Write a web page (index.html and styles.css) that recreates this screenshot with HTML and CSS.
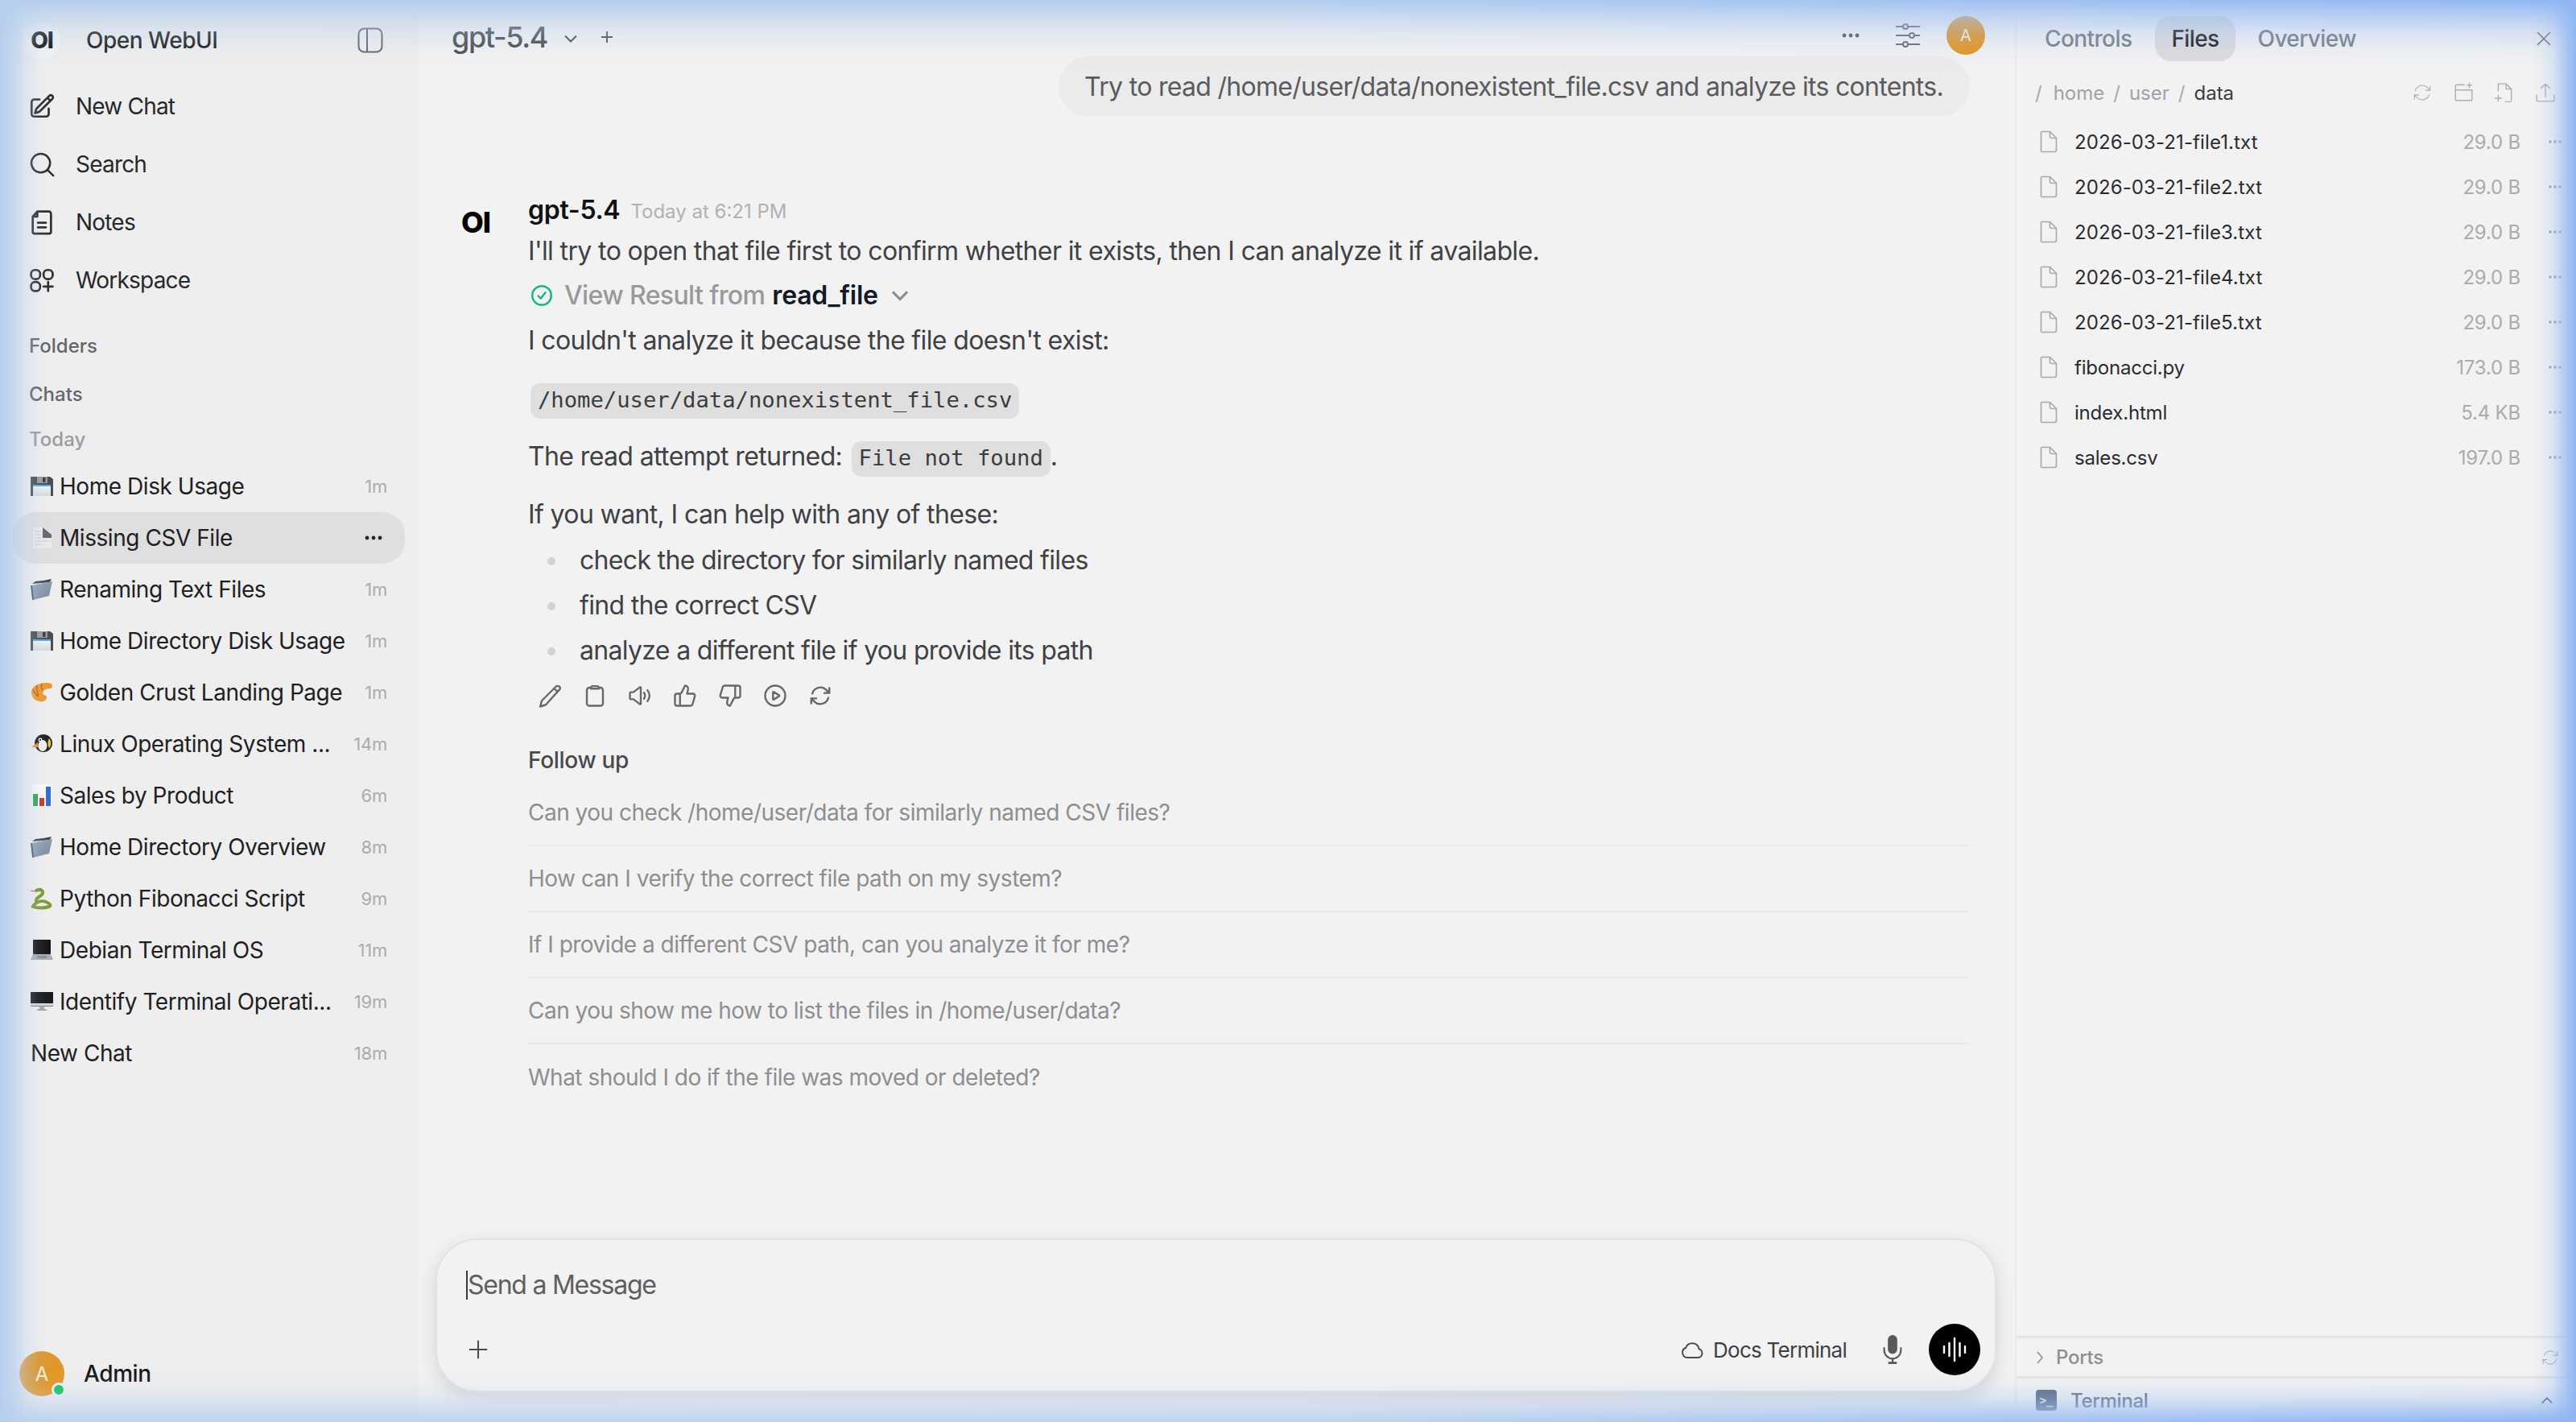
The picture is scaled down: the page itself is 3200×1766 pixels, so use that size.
FILE: index.html
```html
<!DOCTYPE html>
<html lang="en">
<head>
<meta charset="utf-8">
<title>Open WebUI</title>
<link rel="stylesheet" href="styles.css">
</head>
<body>
<svg class="defs" aria-hidden="true">
  <defs>
    <linearGradient id="fold" x1="0" y1="0" x2="1" y2="1"><stop offset="0" stop-color="#98a8ba"/><stop offset="1" stop-color="#7b8c9f"/></linearGradient>
    <linearGradient id="labelg" x1="0" y1="0" x2="0" y2="1"><stop offset="0" stop-color="#f4f6f8"/><stop offset="1" stop-color="#d6dade"/></linearGradient>
    <symbol id="e-floppy" viewBox="0 0 28 28"><path d="M0 2h24l4 3v21H0z" fill="#4b4e53"/><rect x="8" y="2" width="13" height="8" fill="#9a9da1"/><rect x="15" y="3" width="3.5" height="6" fill="#3d4045"/><rect x="3" y="12" width="22" height="14" fill="url(#labelg)"/><rect x="3" y="12" width="22" height="2" fill="#5fa4e6"/></symbol>
    <symbol id="e-doc" viewBox="0 0 28 28"><path d="M3 1h12l11 9v17H3z" fill="#e9e9ea"/><path d="M15 1l11 9v4H15z" fill="#68696b"/><path d="M5 6h8M5 10h8M5 14h8M5 18h19M5 22h10" stroke="#cfcfcf" stroke-width="1.200"/></symbol>
    <symbol id="e-folder" viewBox="0 0 28 28"><path d="M2 7l4-3 10-1 10-2-2 4z" fill="#3f4a56"/><path d="M1 9l26-5-4 18-20 5z" fill="url(#fold)"/><path d="M1 9l2 18" stroke="#4a5561" stroke-width="1.800"/></symbol>
    <symbol id="e-croissant" viewBox="0 0 28 28"><path d="M1 14C1 6 10 2 19 2c6 0 9 2 8 5-1 3-5 2-8 3-3 1-4 3-3.500 6 1.500 2 4.500 1 4.500 4 0 4-5 6-9 5C5 24 1 20 1 14z" fill="#ec9a2f"/><path d="M8 5c-1 4 0 9 2 12M14 3c-1 3-1 6 1 8M3 10c1 4 4 7 7 9" stroke="#b9641a" stroke-width="1.400" fill="none"/></symbol>
    <symbol id="e-penguin" viewBox="0 0 28 28"><circle cx="16" cy="13" r="11" fill="#222326"/><ellipse cx="15" cy="16" rx="5.500" ry="7" fill="#eee"/><circle cx="12" cy="9" r="2.400" fill="#fff"/><circle cx="12" cy="9" r="1.100" fill="#000"/><path d="M1 18l8-6 1 6z" fill="#e8912c"/><path d="M23 7c3 3 3 9 0 12-2-3-2-9 0-12z" fill="#e9c43c"/></symbol>
    <symbol id="e-chart" viewBox="0 0 28 28"><rect x="2" y="0" width="24" height="27" fill="#f7f8fa"/><rect x="3" y="12" width="6" height="15" fill="#2fa84f"/><rect x="11" y="17" width="6" height="10" fill="#d5322c"/><rect x="19" y="3" width="6" height="24" fill="#2d6fd6"/></symbol>
    <symbol id="e-snake" viewBox="0 0 28 28"><path d="M7 4c6-3 10 1 7 5-3 3-8 4-7 8M4 22c4-4 10-6 15-4 5 2 7 5 4 6-6 2-15 2-20 0z" fill="none" stroke="#7d9b32" stroke-width="4" stroke-linecap="round"/><path d="M0 4l5 1" stroke="#c2534a" stroke-width="1"/></symbol>
    <symbol id="e-laptop" viewBox="0 0 28 28"><rect x="3" y="1" width="22" height="18" rx="1" fill="#16171a"/><path d="M3 19h22l3 7H0z" fill="#a8abb0"/><rect x="8" y="21" width="12" height="3" fill="#8b8e93"/></symbol>
    <symbol id="e-desktop" viewBox="0 0 28 28"><rect x="0" y="2" width="28" height="18" fill="#1a1b1e"/><rect x="0" y="16" width="28" height="3.500" fill="#d3d5d8"/><rect x="11" y="19.500" width="6" height="4" fill="#a7a9ad"/><rect x="8" y="23.500" width="12" height="1.500" fill="#8f9195"/></symbol>
    <symbol id="i-file" viewBox="0 0 22 28"><path d="M2.500 1.500h10l8 8v15a2 2 0 0 1-2 2h-16a1.500 1.500 0 0 1-1-1.500V3a1.500 1.500 0 0 1 1-1.500zM12.500 1.500v6a2 2 0 0 0 2 2h6" fill="none" stroke="currentColor" stroke-width="1.600"/></symbol>
    <symbol id="i-dots" viewBox="0 0 24 8"><circle cx="4" cy="4" r="2.400"/><circle cx="12" cy="4" r="2.400"/><circle cx="20" cy="4" r="2.400"/></symbol>
    <symbol id="i-refresh" viewBox="0 0 24 24"><path d="M16.023 9.348h4.992v-.001M2.985 19.644v-4.992m0 0h4.992m-4.993 0l3.181 3.183a8.250 8.250 0 0013.803-3.700M4.031 9.865a8.250 8.250 0 0113.803-3.700l3.181 3.182m0-4.991v4.990" fill="none" stroke="currentColor" stroke-linecap="round" stroke-linejoin="round"/></symbol>
  </defs>
</svg>

<div class="app">
  <aside class="sidebar">
    <div class="side-head">
      <span class="logo-round"><span class="logo-oi">OI</span></span>
      <span class="brand">Open WebUI</span>
      <svg class="panel-toggle" viewBox="0 0 32 32" fill="none" stroke="currentColor" stroke-width="2"><rect x="1.500" y="1.500" width="29" height="29" rx="7"/><path d="M12 1.500v29"/></svg>
    </div>
    <nav class="side-nav">
      <div class="nav-row"><svg class="nav-icon" viewBox="0 0 24 24" fill="none" stroke="currentColor" stroke-width="1.900" stroke-linecap="round" stroke-linejoin="round"><path d="M16.862 4.487l1.687-1.688a1.875 1.875 0 112.652 2.652L10.582 16.070a4.500 4.500 0 01-1.897 1.130L6 18l.8-2.685a4.500 4.500 0 011.130-1.897l8.932-8.931zm0 0L19.500 7.125M18 14v4.750A2.250 2.250 0 0115.750 21H5.250A2.250 2.250 0 013 18.750V8.250A2.250 2.250 0 015.250 6H10"/></svg><span>New Chat</span></div>
      <div class="nav-row"><svg class="nav-icon" viewBox="0 0 24 24" fill="none" stroke="currentColor" stroke-width="1.800" stroke-linecap="round"><circle cx="11" cy="11" r="8.200"/><path d="M17 17l5 5"/></svg><span>Search</span></div>
      <div class="nav-row"><svg class="nav-icon" viewBox="0 0 24 24" fill="none" stroke="currentColor" stroke-width="1.900" stroke-linecap="round" stroke-linejoin="round"><path d="M8 2.500h10a2 2 0 0 1 2 2v16a1.500 1.500 0 0 1-1.500 1.500h-13A1.500 1.500 0 0 1 4 20.500V7zM8 2.500V7H4M8.500 12.500h7M8.500 16.500h7"/></svg><span>Notes</span></div>
      <div class="nav-row"><svg class="nav-icon" viewBox="0 0 24 24" fill="none" stroke="currentColor" stroke-width="1.900" stroke-linecap="round"><rect x="2.500" y="3" width="8" height="8" rx="3.500"/><rect x="13.500" y="3" width="8" height="8" rx="3.500"/><rect x="2.500" y="13.500" width="8" height="8" rx="3.500"/><path d="M17.500 13.500v8M13.500 17.500h8"/></svg><span>Workspace</span></div>
    </nav>
    <div class="side-label label-folders">Folders</div>
    <div class="side-label label-chats">Chats</div>
    <div class="side-label label-today">Today</div>
    <ul class="chat-list">
      <li class="chat"><svg class="emoji"><use href="#e-floppy"/></svg><span class="chat-title">Home Disk Usage</span><span class="chat-time">1m</span></li>
      <li class="chat chat-active"><svg class="emoji"><use href="#e-doc"/></svg><span class="chat-title">Missing CSV File</span><svg class="chat-more"><use href="#i-dots"/></svg></li>
      <li class="chat"><svg class="emoji"><use href="#e-folder"/></svg><span class="chat-title">Renaming Text Files</span><span class="chat-time">1m</span></li>
      <li class="chat"><svg class="emoji"><use href="#e-floppy"/></svg><span class="chat-title">Home Directory Disk Usage</span><span class="chat-time">1m</span></li>
      <li class="chat"><svg class="emoji"><use href="#e-croissant"/></svg><span class="chat-title">Golden Crust Landing Page</span><span class="chat-time">1m</span></li>
      <li class="chat"><svg class="emoji"><use href="#e-penguin"/></svg><span class="chat-title">Linux Operating System ...</span><span class="chat-time">14m</span></li>
      <li class="chat"><svg class="emoji"><use href="#e-chart"/></svg><span class="chat-title">Sales by Product</span><span class="chat-time">6m</span></li>
      <li class="chat"><svg class="emoji"><use href="#e-folder"/></svg><span class="chat-title">Home Directory Overview</span><span class="chat-time">8m</span></li>
      <li class="chat"><svg class="emoji"><use href="#e-snake"/></svg><span class="chat-title">Python Fibonacci Script</span><span class="chat-time">9m</span></li>
      <li class="chat"><svg class="emoji"><use href="#e-laptop"/></svg><span class="chat-title">Debian Terminal OS</span><span class="chat-time">11m</span></li>
      <li class="chat"><svg class="emoji"><use href="#e-desktop"/></svg><span class="chat-title">Identify Terminal Operati...</span><span class="chat-time">19m</span></li>
      <li class="chat"><span class="chat-title">New Chat</span><span class="chat-time">18m</span></li>
    </ul>
    <div class="side-foot">
      <span class="avatar avatar-lg">A<span class="status-dot"></span></span>
      <span class="user-name">Admin</span>
    </div>
  </aside>

  <main class="main">
    <header class="main-head">
      <span class="model-name">gpt-5.4</span>
      <svg class="head-chevron" viewBox="0 0 20 20" fill="none" stroke="currentColor" stroke-width="2"><path d="M3 6.500l7 7 7-7"/></svg>
      <svg class="head-plus" viewBox="0 0 20 20" fill="none" stroke="currentColor" stroke-width="1.900"><path d="M10 3v14M3 10h14"/></svg>
      <span class="head-spacer"></span>
      <svg class="head-dots"><use href="#i-dots"/></svg>
      <svg class="head-sliders" viewBox="0 0 30 30" fill="none" stroke="currentColor" stroke-width="2"><path d="M0 4h9M15 4h15M0 15h17M23 15h7M0 26h9M15 26h15"/><circle cx="12" cy="4" r="3"/><circle cx="20" cy="15" r="3"/><circle cx="12" cy="26" r="3"/></svg>
      <span class="avatar avatar-sm">A</span>
    </header>

    <section class="thread">
      <div class="user-row"><div class="user-bubble">Try to read /home/user/data/nonexistent_file.csv and analyze its contents.</div></div>
      <article class="message">
        <div class="msg-logo">OI</div>
        <div class="msg-body">
          <div class="msg-meta"><span class="msg-name">gpt-5.4</span><span class="msg-time">Today at 6:21 PM</span></div>
          <p class="line">I'll try to open that file first to confirm whether it exists, then I can analyze it if available.</p>
          <div class="line tool-line">
            <svg class="tool-check" viewBox="0 0 28 28" fill="none" stroke="#10b981" stroke-width="2.400" stroke-linecap="round" stroke-linejoin="round"><circle cx="14" cy="14" r="11.800"/><path d="M9.500 14.500l3.200 3.200 5.800-7.400"/></svg>
            <span class="tool-muted">View Result from</span><strong class="tool-name">read_file</strong>
            <svg class="tool-chevron" viewBox="0 0 20 20" fill="none" stroke="currentColor" stroke-width="2.400"><path d="M3 6.500l7 7 7-7"/></svg>
          </div>
          <p class="line gap-sm">I couldn't analyze it because the file doesn't exist:</p>
          <p class="line gap-lg"><code class="code">/home/user/data/nonexistent_file.csv</code></p>
          <p class="line gap-lg">The read attempt returned: <code class="code">File not found</code>.</p>
          <p class="line gap-lg">If you want, I can help with any of these:</p>
          <ul class="bullets">
            <li>check the directory for similarly named files</li>
            <li>find the correct CSV</li>
            <li>analyze a different file if you provide its path</li>
          </ul>
          <div class="actions">
            <svg class="action" viewBox="0 0 24 24"><path d="M20.500 2.500a2 2 0 0 1 1.500 3L8 21l-5.500 1.800L4 17 18 3a2.500 2.500 0 0 1 2.500-.5zM16.500 5l3 3"/></svg>
            <svg class="action" viewBox="0 0 24 24"><path d="M8 4H6.500A2.500 2.500 0 0 0 4 6.500v13A2.500 2.500 0 0 0 6.500 22h11a2.500 2.500 0 0 0 2.500-2.500v-13A2.500 2.500 0 0 0 17.500 4H16M8 4.500A2 2 0 0 1 10 2.500h4a2 2 0 0 1 2 2V5H8z"/></svg>
            <svg class="action" viewBox="0 0 24 24"><path d="M12 3.500 5.500 8.500H3a1 1 0 0 0-1 1v5a1 1 0 0 0 1 1h2.500l6.500 5a.6.6 0 0 0 .8-.5V4a.6.6 0 0 0-.8-.5zM16 9c1.300 2 1.300 4 0 6M19.500 6.500c2.500 3.500 2.500 7.500 0 11"/></svg>
            <svg class="action" viewBox="0 0 24 24"><path d="M7 10v12M15 5.880 14 10h5.830a2 2 0 0 1 1.920 2.560l-2.330 8A2 2 0 0 1 17.500 22H4a2 2 0 0 1-2-2v-8a2 2 0 0 1 2-2h2.760a2 2 0 0 0 1.790-1.110L12 2a3.130 3.130 0 0 1 3 3.880Z"/></svg>
            <svg class="action" viewBox="0 0 24 24"><path d="M17 14V2M9 18.120 10 14H4.170a2 2 0 0 1-1.920-2.560l2.330-8A2 2 0 0 1 6.500 2H20a2 2 0 0 1 2 2v8a2 2 0 0 1-2 2h-2.760a2 2 0 0 0-1.790 1.110L12 22a3.130 3.130 0 0 1-3-3.880Z"/></svg>
            <svg class="action" viewBox="0 0 24 24"><circle cx="12" cy="12" r="10"/><path d="M16 11.600a.5.500 0 0 1 0 .8l-5.500 3.300a.5.500 0 0 1-.7-.4V8.700a.5.500 0 0 1 .7-.4z"/></svg>
            <svg class="action" viewBox="0 0 24 24"><path d="M16.023 9.348h4.992v-.001M2.985 19.644v-4.992m0 0h4.992m-4.993 0l3.181 3.183a8.250 8.250 0 0013.803-3.700M4.031 9.865a8.250 8.250 0 0113.803-3.700l3.181 3.182m0-4.991v4.990"/></svg>
          </div>
          <div class="followup-title">Follow up</div>
          <ul class="followups">
            <li>Can you check /home/user/data for similarly named CSV files?</li>
            <li>How can I verify the correct file path on my system?</li>
            <li>If I provide a different CSV path, can you analyze it for me?</li>
            <li>Can you show me how to list the files in /home/user/data?</li>
            <li>What should I do if the file was moved or deleted?</li>
          </ul>
        </div>
      </article>
    </section>

    <section class="composer">
      <div class="composer-input"><span class="caret"></span>Send a Message</div>
      <div class="composer-bar">
        <svg class="composer-plus" viewBox="0 0 28 28" fill="none" stroke="currentColor" stroke-width="2.200"><path d="M14 2v24M2 14h24"/></svg>
        <span class="head-spacer"></span>
        <svg class="cloud" viewBox="0 0 28 24" fill="none" stroke="currentColor" stroke-width="2" stroke-linejoin="round"><path d="M8 22h13a5.500 5.500 0 0 0 1.500-10.800A8.500 8.500 0 0 0 6.200 9.800 6.300 6.300 0 0 0 8 22z"/></svg>
        <span class="docs-label">Docs Terminal</span>
        <svg class="mic" viewBox="0 0 28 40" fill="currentColor"><rect x="7.500" y="0" width="13" height="26" rx="6.500"/><path d="M2.500 18v3a11.500 11.500 0 0 0 23 0v-3" fill="none" stroke="currentColor" stroke-width="2.400" stroke-linecap="round"/><rect x="12.800" y="32" width="2.400" height="6"/><rect x="8" y="37" width="12" height="3" rx="1"/></svg>
        <span class="voice-btn"><svg class="voice-icon" viewBox="0 0 32 32" stroke="#fff" stroke-width="2.400" stroke-linecap="round"><path d="M3 12v8M9.500 8v16M16 2v28M22.500 8v16M29 12v8"/></svg></span>
      </div>
    </section>
  </main>

  <aside class="panel">
    <div class="tabs">
      <span class="tab">Controls</span>
      <span class="tab tab-active">Files</span>
      <span class="tab tab-over">Overview</span>
      <svg class="panel-close" viewBox="0 0 20 20" fill="none" stroke="currentColor" stroke-width="1.500"><path d="M2 2l16 16M18 2L2 18"/></svg>
    </div>
    <div class="crumbs">
      <span class="crumb-sep crumb-root">/</span><span>home</span><span class="crumb-sep">/</span><span>user</span><span class="crumb-sep">/</span><span class="crumb-now">data</span>
      <span class="head-spacer"></span>
      <svg class="crumb-icon"><use href="#i-refresh"/></svg>
      <svg class="crumb-icon" viewBox="0 0 24 24" fill="none" stroke="currentColor" stroke-width="1.300" stroke-linecap="round"><path d="M13 3H5a2 2 0 0 0-2 2v15a1 1 0 0 0 1 1h17a1 1 0 0 0 1-1V9H3M19 1v5M16.500 3.500h5"/></svg>
      <svg class="crumb-icon" viewBox="0 0 24 24" fill="none" stroke="currentColor" stroke-width="1.300" stroke-linecap="round"><path d="M5 10V2h9l6 6v13a1.500 1.500 0 0 1-1.500 1.500H13M14 2v6h6M5 15v7M1.500 18.500h7"/></svg>
      <svg class="crumb-icon" viewBox="0 0 24 24" fill="none" stroke="currentColor" stroke-width="1.300" stroke-linecap="round" stroke-linejoin="round"><path d="M12 17V2M7 7l5-5 5 5M2 15v5a2 2 0 0 0 2 2h16a2 2 0 0 0 2-2v-5"/></svg>
    </div>
    <ul class="files">
      <li class="file file-dated"><svg class="file-icon"><use href="#i-file"/></svg><span class="file-name">2026-03-21-file1.txt</span><span class="file-size">29.0 B</span><svg class="file-more"><use href="#i-dots"/></svg></li>
      <li class="file file-dated"><svg class="file-icon"><use href="#i-file"/></svg><span class="file-name">2026-03-21-file2.txt</span><span class="file-size">29.0 B</span><svg class="file-more"><use href="#i-dots"/></svg></li>
      <li class="file file-dated"><svg class="file-icon"><use href="#i-file"/></svg><span class="file-name">2026-03-21-file3.txt</span><span class="file-size">29.0 B</span><svg class="file-more"><use href="#i-dots"/></svg></li>
      <li class="file file-dated"><svg class="file-icon"><use href="#i-file"/></svg><span class="file-name">2026-03-21-file4.txt</span><span class="file-size">29.0 B</span><svg class="file-more"><use href="#i-dots"/></svg></li>
      <li class="file file-dated"><svg class="file-icon"><use href="#i-file"/></svg><span class="file-name">2026-03-21-file5.txt</span><span class="file-size">29.0 B</span><svg class="file-more"><use href="#i-dots"/></svg></li>
      <li class="file"><svg class="file-icon"><use href="#i-file"/></svg><span class="file-name">fibonacci.py</span><span class="file-size">173.0 B</span><svg class="file-more"><use href="#i-dots"/></svg></li>
      <li class="file"><svg class="file-icon"><use href="#i-file"/></svg><span class="file-name">index.html</span><span class="file-size">5.4 KB</span><svg class="file-more"><use href="#i-dots"/></svg></li>
      <li class="file"><svg class="file-icon"><use href="#i-file"/></svg><span class="file-name">sales.csv</span><span class="file-size">197.0 B</span><svg class="file-more"><use href="#i-dots"/></svg></li>
    </ul>
    <div class="panel-foot">
      <div class="foot-row ports">
        <svg class="foot-chev" viewBox="0 0 10 20" fill="none" stroke="currentColor" stroke-width="1.600"><path d="M2 3l6 7-6 7"/></svg>
        <span>Ports</span>
        <span class="head-spacer"></span>
        <svg class="foot-refresh"><use href="#i-refresh"/></svg>
      </div>
      <div class="foot-row terminal">
        <span class="term-icon">&gt;_</span>
        <span>Terminal</span>
        <span class="head-spacer"></span>
        <svg class="foot-up" viewBox="0 0 20 12" fill="none" stroke="currentColor" stroke-width="1.600"><path d="M3 10l7-7 7 7"/></svg>
      </div>
    </div>
  </aside>
</div>

<div class="glow glow-top"></div>
<div class="glow glow-bottom"></div>
<div class="glow glow-left"></div>
<div class="glow glow-right"></div>
</body>
</html>
```

FILE: styles.css
```css
* { box-sizing: border-box; }
html, body { margin: 0; padding: 0; }
body {
  width: 3200px;
  height: 1766px;
  overflow: hidden;
  position: relative;
  background: #f2f2f2;
  font-family: Inter, "Liberation Sans", sans-serif;
  color: #1f2023;
}
.defs { position: absolute; width: 0; height: 0; }
ul { list-style: none; margin: 0; padding: 0; }
p { margin: 0; }
.app { display: flex; width: 3200px; height: 1766px; }
.head-spacer { flex: 1; }

/* sidebar */
.sidebar { width: 520px; flex: none; background: #eeeeee; display: flex; flex-direction: column; border-right: 2px solid #ececec; }
.side-head { height: 96px; padding: 4px 42px 0 29px; display: flex; align-items: center; }
.logo-round { width: 46px; height: 46px; border-radius: 50%; background: #f3f3f3; display: flex; align-items: center; justify-content: center; }
.logo-oi { font-size: 28px; font-weight: 800; color: #111; letter-spacing: -1px; }
.brand { margin-left: 32px; font-size: 28px; font-weight: 500; color: #1c1c20; letter-spacing: -.5px; }
.panel-toggle { width: 32px; height: 32px; margin-left: auto; color: #63666b; }
.side-nav { display: flex; flex-direction: column; }
.nav-row { height: 72px; padding-left: 35px; display: flex; align-items: center; gap: 25px; font-size: 28px; color: #27282b; letter-spacing: -.8px; }
.nav-icon { width: 34px; height: 34px; flex: none; color: #2f3033; }
.side-label { height: 40px; padding-left: 36px; display: flex; align-items: center; font-size: 24px; font-weight: 500; color: #63666c; }
.label-folders { margin-top: 25px; }
.label-chats { margin-top: 20px; }
.label-today { margin-top: 16px; color: #9a9ca1; }
.chat-list { margin: 7px 0 0 16px; width: 487px; }
.chat { height: 64px; padding: 0 22px; display: flex; align-items: center; border-radius: 28px; font-size: 28px; color: #1f2023; letter-spacing: -.45px; }
.chat-active { background: #dfdfdf; }
.emoji { width: 28px; height: 28px; flex: none; margin-right: 8px; }
.chat-title { flex: 1; white-space: nowrap; overflow: hidden; }
.chat-time { font-size: 22px; color: #ababae; letter-spacing: -.2px; }
.chat-more { width: 24px; height: 8px; fill: #26272a; margin-right: 5px; }
.side-foot { margin-top: auto; height: 56px; margin-bottom: 32px; padding-left: 24px; display: flex; align-items: center; }
.avatar { display: flex; align-items: center; justify-content: center; border-radius: 50%; color: #f6efe3; background: linear-gradient(135deg, #d99a3c, #e8951a); }
.avatar-lg { width: 56px; height: 56px; font-size: 24px; position: relative; flex: none; }
.status-dot { position: absolute; right: -2px; bottom: -1px; width: 18px; height: 18px; border-radius: 50%; background: #10c464; border: 3px solid #f0f0f0; }
.user-name { margin-left: 24px; font-size: 28px; font-weight: 500; color: #18181b; letter-spacing: -.4px; }

/* main */
.main { width: 1983px; flex: none; display: flex; flex-direction: column; }
.main-head { height: 70px; flex: none; padding: 20px 37px 0 41px; display: flex; align-items: flex-start; }
.model-name { font-size: 36px; line-height: 52px; font-weight: 500; color: #4b4d52; letter-spacing: -1.4px; }
.head-chevron { width: 20px; height: 20px; margin: 18px 0 0 19px; color: #4b4d52; }
.head-plus { width: 20px; height: 20px; margin: 16px 0 0 25px; color: #4b4d52; }
.head-dots { width: 26px; height: 8px; margin: 20px 10px 0 0; fill: #55575c; }
.head-sliders { width: 30px; height: 30px; margin: 9px 0 0 33px; color: #6b6e74; }
.avatar-sm { width: 48px; height: 48px; font-size: 20px; margin-left: 33px; flex: none; }
.thread { flex: 1; min-height: 0; display: flex; flex-direction: column; padding: 0 58px 0 37px; font-size: 32px; color: #404144; letter-spacing: -.62px; }
.user-row { display: flex; justify-content: flex-end; }
.user-bubble { height: 74px; padding: 0 33px 0 32px; border-radius: 37px; background: #ebebeb; display: flex; align-items: center; white-space: nowrap; color: #5a5b5f; letter-spacing: -.7px; margin-right: -2px; }
.message { display: flex; margin-top: 92px; }
.msg-logo { width: 99px; flex: none; padding: 22px 0 0 16px; font-size: 36px; line-height: 36px; font-weight: 800; color: #050505; letter-spacing: -1px; }
.msg-body { flex: 1; min-width: 0; }
.msg-meta { height: 48px; display: flex; align-items: center; gap: 13px; }
.msg-name { font-size: 32px; font-weight: 600; color: #111; letter-spacing: -.3px; }
.msg-time { font-size: 24px; color: #b0b1b4; margin-top: 4px; letter-spacing: 0; }
.line { min-height: 48px; line-height: 48px; margin-top: 4px; white-space: nowrap; }
.tool-line { margin-top: 7px; display: flex; align-items: center; }
.tool-check { width: 28px; height: 28px; margin: 0 14px 0 3px; flex: none; }
.tool-muted { color: #98999c; font-weight: 500; margin-right: 9px; }
.tool-name { color: #111827; font-weight: 600; letter-spacing: -.2px; }
.tool-chevron { width: 26px; height: 26px; margin-left: 14px; color: #8b8c90; }
.gap-sm { margin-top: 8px; }
.gap-lg { margin-top: 24px; }
.code { font-family: "DejaVu Sans Mono", "Liberation Mono", monospace; font-size: 27.200px; line-height: 1; letter-spacing: 0; background: #dfdfdf; color: #3b3c3f; padding: 5px 9px 8px; border-radius: 12px; margin: 0 0 0 3px; }
.bullets { margin-top: 9px; }
.bullets li { height: 48px; line-height: 48px; margin-bottom: 8px; padding-left: 64px; position: relative; letter-spacing: -.68px; }
.bullets li::before { content: ""; position: absolute; left: 24px; top: 20px; width: 10px; height: 10px; border-radius: 50%; background: #ced2d9; }
.actions { height: 48px; margin: 6px 0 0 12px; display: flex; align-items: center; gap: 26px; }
.action { width: 30px; height: 30px; fill: none; stroke: #67686b; stroke-width: 1.900; stroke-linecap: round; stroke-linejoin: round; flex: none; }
.followup-title { height: 40px; margin-top: 36px; display: flex; align-items: center; font-size: 28px; font-weight: 500; color: #48494c; letter-spacing: -.3px; }
.followups { margin-top: 5px; }
.followups li { height: 82px; display: flex; align-items: center; font-size: 28px; color: #8d8e91; border-bottom: 2px solid #e9e9e9; letter-spacing: -.5px; }
.followups li:last-child { border-bottom: 0; }

/* composer */
.composer { flex: none; height: 191px; margin: 0 23px 37px 21px; padding: 0 18px 0 36px; border: 2px solid #e2e2e2; border-radius: 52px; background: #f2f2f2; box-shadow: 0 8px 22px rgba(30, 40, 60, .14); display: flex; flex-direction: column; }
.composer-input { height: 104px; padding-top: 38px; font-size: 32px; line-height: 36px; color: #5e5f62; position: relative; padding-left: 2px; letter-spacing: -1.250px; }
.caret { position: absolute; left: 0; top: 38px; width: 2px; height: 36px; background: #3a3b3e; }
.composer-bar { height: 64px; display: flex; align-items: center; }
.composer-plus { width: 26px; height: 26px; color: #4a4b4e; margin-left: 2px; }
.cloud { width: 28px; height: 24px; color: #4c4d50; margin-right: 12px; }
.docs-label { font-size: 26px; color: #3e3f42; font-weight: 400; letter-spacing: -.75px; margin-right: 44px; }
.mic { width: 26px; height: 36px; color: #58595c; margin-right: 32px; }
.voice-btn { width: 64px; height: 64px; border-radius: 50%; background: #000; display: flex; align-items: center; justify-content: center; flex: none; }
.voice-icon { width: 32px; height: 32px; }

/* right panel */
.panel { flex: 1; min-width: 0; background: #f2f2f2; border-left: 2px solid #ebebeb; display: flex; flex-direction: column; }
.tabs { margin-top: 20px; padding: 0 30px 0 15px; height: 56px; display: flex; align-items: center; font-size: 28px; font-weight: 500; color: #7c7e84; letter-spacing: -.6px; }
.tab { height: 56px; padding: 0 20px; display: flex; align-items: center; border-radius: 20px; margin-right: 8px; }
.tab-active { background: #dcdcdc; color: #1f2023; margin-left: 1px; }
.tab-over { margin-right: auto; }
.panel-close { width: 20px; height: 20px; color: #65676c; }
.crumbs { margin-top: 19px; height: 40px; padding: 0 25px 0 23px; display: flex; align-items: center; gap: 11px; font-size: 24px; color: #a1a2a6; }
.crumb-sep { color: #a8a9ad; }
.crumb-root { margin-right: 3px; }
.crumb-now { color: #3c3d40; }
.crumb-icon { width: 26px; height: 26px; color: #adaeb1; margin-left: 14px; flex: none; }
.files { margin-top: 13px; }
.file { height: 56px; padding: 0 16px 0 29px; display: flex; align-items: center; font-size: 24px; color: #2b2c2f; letter-spacing: -.2px; }
.file-dated .file-name { letter-spacing: .1px; }
.file-icon { width: 22px; height: 28px; color: #a9a9ab; flex: none; margin-right: 21px; }
.file-name { flex: 1; }
.file-size { color: #ababae; margin-right: 33px; letter-spacing: -.2px; }
.file-more { width: 20px; height: 6px; fill: #a8a9ac; flex: none; }
.panel-foot { margin-top: auto; }
.foot-row { display: flex; align-items: center; padding: 0 27px 0 24px; font-size: 24px; font-weight: 500; color: #8d8f94; border-top: 3px solid #e4e4e4; letter-spacing: -.3px; }
.ports { height: 50px; padding-right: 20px; }
.terminal { height: 57px; color: #68768c; }
.foot-chev { width: 10px; height: 20px; margin-right: 15px; }
.foot-refresh { width: 24px; height: 24px; color: #a5a6a9; }
.term-icon { width: 26px; height: 26px; border-radius: 4px; background: #5f6f88; color: #eef1f5; font-size: 14px; font-family: "DejaVu Sans Mono", monospace; font-weight: 700; display: flex; align-items: center; justify-content: center; margin-right: 17px; }
.foot-up { width: 18px; height: 12px; color: #2f3c52; }

/* window glow */
.glow { position: absolute; pointer-events: none; }
.glow-top { left: 0; top: 0; width: 3200px; height: 84px; background: linear-gradient(to right, #b4cdec, #b2cdee 50%, #8fb6f3); -webkit-mask-image: linear-gradient(to bottom, #000 0, rgba(0,0,0,.6) 25%, rgba(0,0,0,.25) 50%, rgba(0,0,0,.07) 75%, transparent 100%); mask-image: linear-gradient(to bottom, #000 0, rgba(0,0,0,.6) 25%, rgba(0,0,0,.25) 50%, rgba(0,0,0,.07) 75%, transparent 100%); }
.glow-bottom { left: 0; bottom: 0; width: 3200px; height: 64px; background: linear-gradient(to right, #bcd2ee, #bed3ee 50%, #8cb3f4); -webkit-mask-image: linear-gradient(to top, #000 0, rgba(0,0,0,.6) 25%, rgba(0,0,0,.25) 50%, rgba(0,0,0,.07) 75%, transparent 100%); mask-image: linear-gradient(to top, #000 0, rgba(0,0,0,.6) 25%, rgba(0,0,0,.25) 50%, rgba(0,0,0,.07) 75%, transparent 100%); }
.glow-left { left: 0; top: 0; width: 60px; height: 1766px; background: #b6cfee; -webkit-mask-image: linear-gradient(to right, #000 0, rgba(0,0,0,.7) 30%, rgba(0,0,0,.28) 55%, rgba(0,0,0,.07) 80%, transparent 100%); mask-image: linear-gradient(to right, #000 0, rgba(0,0,0,.7) 30%, rgba(0,0,0,.28) 55%, rgba(0,0,0,.07) 80%, transparent 100%); }
.glow-right { right: 0; top: 0; width: 56px; height: 1766px; background: #8fb6f3; -webkit-mask-image: linear-gradient(to left, #000 0, rgba(0,0,0,.65) 25%, rgba(0,0,0,.25) 50%, rgba(0,0,0,.07) 75%, transparent 100%); mask-image: linear-gradient(to left, #000 0, rgba(0,0,0,.65) 25%, rgba(0,0,0,.25) 50%, rgba(0,0,0,.07) 75%, transparent 100%); }
```
